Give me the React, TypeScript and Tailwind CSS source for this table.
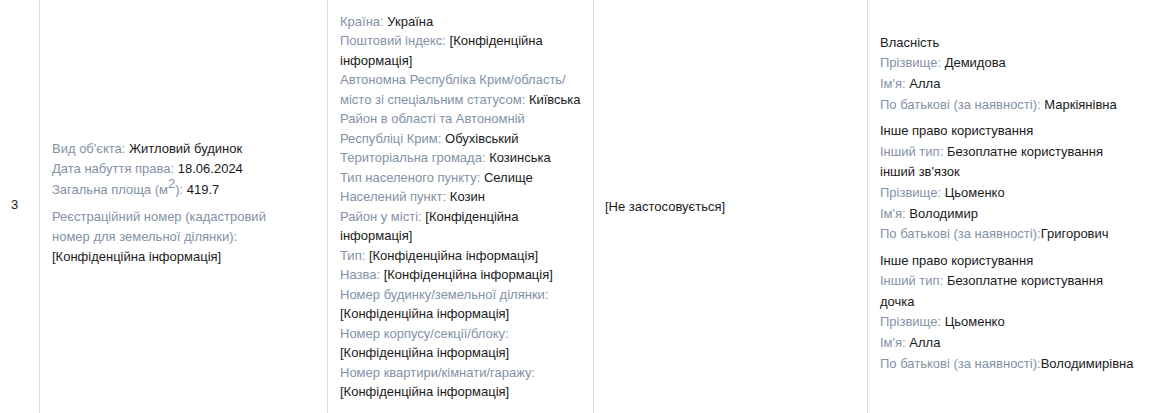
import React from 'react'

const label = 'text-[#8391a7]'

function Field({ name, value, tight }: { name: string; value: React.ReactNode; tight?: boolean }) {
    return (
        <div>
            <span className={label}>{name}:{tight ? '' : ' '}</span>
            <span>{value}</span>
        </div>
    )
}

const Hidden = '[Конфіденційна інформація]'

export default function App() {
    return (
        <div className="h-[413px] w-full overflow-hidden bg-white font-['Liberation_Sans',Arial,sans-serif] text-[13px] text-[#1a1a1a]">
            <div className="grid h-full grid-cols-[39px_288px_266px_274px_1fr]">
                <div className="flex items-center pb-[3px] pl-[11px]">3</div>

                <div className="flex flex-col justify-center border-l border-[#dcdcdc] pb-[7px] pl-3 pr-3 leading-[20px]">
                    <div className="w-[228px]">
                        <Field name="Вид об'єкта" value="Житловий будинок" />
                        <Field name="Дата набуття права" value="18.06.2024" />
                        <div className="leading-[22px]">
                            <span className={label}>
                                Загальна площа (м<sup className="top-[-0.45em] text-[13px]">2</sup>):{' '}
                            </span>
                            <span>419.7</span>
                        </div>
                        <div className="mt-[6px]">
                            <div className={label}>Реєстраційний номер (кадастровий номер для земельної ділянки):</div>
                            <div>{Hidden}</div>
                        </div>
                    </div>
                </div>

                <div className="flex flex-col justify-center border-l border-[#dcdcdc] pl-3 pr-3 leading-[19.5px]">
                    <Field name="Країна" value="Україна" />
                    <Field name="Поштовий індекс" value={Hidden} />
                    <Field name="Автономна Республіка Крим/область/місто зі спеціальним статусом" value="Київська" />
                    <Field name="Район в області та Автономній Республіці Крим" value="Обухівський" />
                    <Field name="Територіальна громада" value="Козинська" />
                    <Field name="Тип населеного пункту" value="Селище" />
                    <Field name="Населений пункт" value="Козин" />
                    <Field name="Район у місті" value={Hidden} />
                    <Field name="Тип" value={Hidden} />
                    <Field name="Назва" value={Hidden} />
                    <div className={label}>Номер будинку/земельної ділянки:</div>
                    <div>{Hidden}</div>
                    <div className={label}>Номер корпусу/секції/блоку:</div>
                    <div>{Hidden}</div>
                    <div className={label}>Номер квартири/кімнати/гаражу:</div>
                    <div>{Hidden}</div>
                </div>

                <div className="flex items-center border-l border-[#dcdcdc] pl-[11px] pr-3">[Не застосовується]</div>

                <div className="flex flex-col justify-center gap-[6px] border-l border-[#dcdcdc] pb-[6px] pl-3 pr-3 leading-[20.6px]">
                    <div>
                        <div>Власність</div>
                        <Field name="Прізвище" value="Демидова" />
                        <Field name="Ім'я" value="Алла" />
                        <Field name="По батькові (за наявності)" value="Маркіянівна" />
                    </div>
                    <div>
                        <div>Інше право користування</div>
                        <Field name="Інший тип" value="Безоплатне користування" />
                        <div>інший зв'язок</div>
                        <Field name="Прізвище" value="Цьоменко" />
                        <Field name="Ім'я" value="Володимир" />
                        <Field name="По батькові (за наявності)" value="Григорович" tight />
                    </div>
                    <div>
                        <div>Інше право користування</div>
                        <Field name="Інший тип" value="Безоплатне користування" />
                        <div>дочка</div>
                        <Field name="Прізвище" value="Цьоменко" />
                        <Field name="Ім'я" value="Алла" />
                        <Field name="По батькові (за наявності)" value="Володимирівна" tight />
                    </div>
                </div>
            </div>
        </div>
    )
}
